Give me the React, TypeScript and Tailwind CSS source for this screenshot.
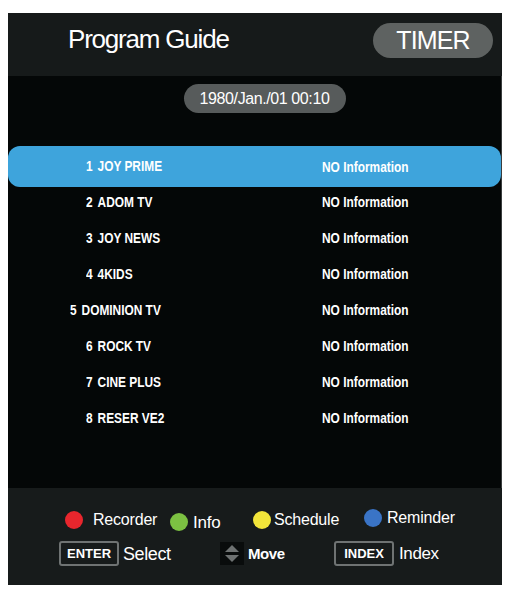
import React from "react";

const channels = [
  { n: 1, name: "JOY PRIME", indent: "pl-[78px]" },
  { n: 2, name: "ADOM TV", indent: "pl-[78px]" },
  { n: 3, name: "JOY NEWS", indent: "pl-[78px]" },
  { n: 4, name: "4KIDS", indent: "pl-[78px]" },
  { n: 5, name: "DOMINION TV", indent: "pl-[62px]" },
  { n: 6, name: "ROCK TV", indent: "pl-[78px]" },
  { n: 7, name: "CINE PLUS", indent: "pl-[78px]" },
  { n: 8, name: "RESER VE2", indent: "pl-[78px]" },
];

function MoveIcon() {
  return (
    <svg width="24" height="23" viewBox="0 0 24 23" className="shrink-0">
      <rect width="24" height="23" fill="#090c0c" />
      <polygon points="12,3 19,10 5,10" fill="#6e7272" />
      <polygon points="5,13 19,13 12,20" fill="#6e7272" />
    </svg>
  );
}

export default function App() {
  return (
    <div className="min-h-screen bg-white pl-[8px] pt-[13px] font-['Liberation_Sans',Arial,sans-serif] text-white">
      <div className="w-[494px] h-[572px] flex flex-col">
        {/* Header */}
        <div className="h-[63px] bg-[#161a1a] flex items-start">
          <h1 className="ml-[60px] mt-[13px] text-[26px] tracking-[-1.2px] leading-none">Program Guide</h1>
          <div className="ml-auto mr-[9px] mt-[10px] w-[120px] h-[35px] rounded-full bg-[#5e6261] flex items-center justify-center text-[25px] tracking-[-0.9px] leading-none">
            TIMER
          </div>
        </div>

        {/* Body */}
        <div className="h-[412px] bg-[#040707] border-r border-[#3a3d3d] flex flex-col">
          <div className="flex justify-center pt-[8px]">
            <div className="ml-[20px] w-[162px] h-[29px] rounded-full bg-[#575b5b] flex items-center justify-center text-[16px] tracking-[-0.4px] leading-none">
              1980/Jan./01 00:10
            </div>
          </div>

          <div className="mt-[33px] flex flex-col font-bold text-[14.5px] leading-none">
            {channels.map((c, i) => (
              <div
                key={c.n}
                className={
                  i === 0
                    ? "h-[41px] rounded-[12px] bg-[#3ea4dc] flex items-center"
                    : i === 1
                      ? "h-[36px] -mt-[3px] flex items-center"
                      : "h-[36px] flex items-center"
                }
              >
                <div className={`w-[314px] shrink-0 ${c.indent} ${i === 0 ? "-mt-[1px]" : ""}`}>
                  <div className="inline-flex gap-[6px] scale-x-[0.82] origin-left">
                    <span>{c.n}</span>
                    <span>{c.name}</span>
                  </div>
                </div>
                <span className={`inline-block scale-x-[0.82] origin-left whitespace-nowrap ${i === 0 ? "mt-[2px]" : ""}`}>
                  NO Information
                </span>
              </div>
            ))}
          </div>
        </div>

        {/* Footer */}
        <div className="h-[97px] bg-[#171b1b] flex flex-col">
          <div className="mt-[22px] h-[20px] flex items-center pl-[57px] text-[16px] tracking-[-0.2px] leading-none">
            <div className="w-[105px] flex items-center">
              <span className="w-[18px] h-[18px] rounded-full bg-[#e8262d]" />
              <span className="ml-[10px]">Recorder</span>
            </div>
            <div className="w-[83px] flex items-center mt-[4px]">
              <span className="w-[18px] h-[18px] rounded-full bg-[#7cc142]" />
              <span className="ml-[5px] text-[17px]">Info</span>
            </div>
            <div className="w-[111px] flex items-center">
              <span className="w-[18px] h-[18px] rounded-full bg-[#f2e53a]" />
              <span className="ml-[3px]">Schedule</span>
            </div>
            <div className="flex items-center -mt-[5px]">
              <span className="w-[18px] h-[18px] rounded-full bg-[#3a74c6]" />
              <span className="ml-[5px]">Reminder</span>
            </div>
          </div>

          <div className="mt-[11px] flex items-center pl-[51px] leading-none">
            <div className="w-[161px] flex items-center">
              <span className="w-[60px] h-[25px] rounded-[3px] border-2 border-[#6f7373] flex items-center justify-center text-[13px] font-bold">
                ENTER
              </span>
              <span className="ml-[4px] text-[18px] tracking-[-0.4px]">Select</span>
            </div>
            <div className="w-[114px] flex items-center">
              <MoveIcon />
              <span className="ml-[4px] text-[15px] font-bold tracking-[-0.4px]">Move</span>
            </div>
            <div className="flex items-center">
              <span className="w-[60px] h-[25px] rounded-[3px] border-2 border-[#6f7373] flex items-center justify-center text-[13px] font-bold">
                INDEX
              </span>
              <span className="ml-[5px] text-[17px] tracking-[-0.4px]">Index</span>
            </div>
          </div>
        </div>
      </div>
    </div>
  );
}
